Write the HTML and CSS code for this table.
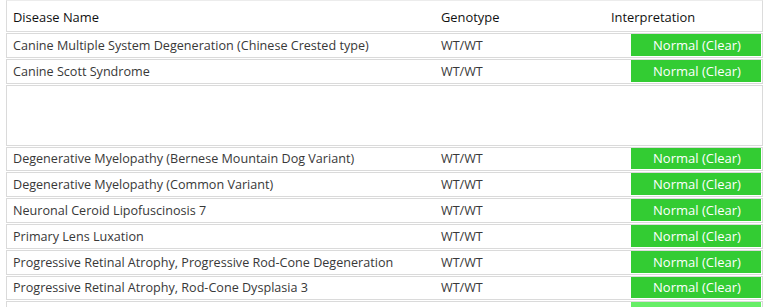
FILE: index.html
```html
<!DOCTYPE html>
<html>
<head>
<meta charset="utf-8">
<link rel="stylesheet" href="styles.css">
</head>
<body>
<div class="panel">
  <div class="head">
    <div class="c1">Disease Name</div>
    <div class="c2">Genotype</div>
    <div class="c3">Interpretation</div>
  </div>
  <div class="row"><div class="c1">Canine Multiple System Degeneration (Chinese Crested type)</div><div class="c2">WT/WT</div><div class="c3"><span class="badge">Normal (Clear)</span></div></div>
  <div class="row"><div class="c1">Canine Scott Syndrome</div><div class="c2">WT/WT</div><div class="c3"><span class="badge">Normal (Clear)</span></div></div>
  <div class="row spacer"></div>
  <div class="row"><div class="c1">Degenerative Myelopathy (Bernese Mountain Dog Variant)</div><div class="c2">WT/WT</div><div class="c3"><span class="badge">Normal (Clear)</span></div></div>
  <div class="row"><div class="c1">Degenerative Myelopathy (Common Variant)</div><div class="c2">WT/WT</div><div class="c3"><span class="badge">Normal (Clear)</span></div></div>
  <div class="row"><div class="c1">Neuronal Ceroid Lipofuscinosis 7</div><div class="c2">WT/WT</div><div class="c3"><span class="badge">Normal (Clear)</span></div></div>
  <div class="row"><div class="c1">Primary Lens Luxation</div><div class="c2">WT/WT</div><div class="c3"><span class="badge">Normal (Clear)</span></div></div>
  <div class="row"><div class="c1">Progressive Retinal Atrophy, Progressive Rod-Cone Degeneration</div><div class="c2">WT/WT</div><div class="c3"><span class="badge">Normal (Clear)</span></div></div>
  <div class="row"><div class="c1">Progressive Retinal Atrophy, Rod-Cone Dysplasia 3</div><div class="c2">WT/WT</div><div class="c3"><span class="badge">Normal (Clear)</span></div></div>
  <div class="row"><div class="c1"></div><div class="c2"></div><div class="c3"><span class="badge light"></span></div></div>
</div>
</body>
</html>
```
FILE: styles.css
```css
html, body {
  margin: 0;
  padding: 0;
  background: #ffffff;
  overflow: hidden;
}
body {
  font-family: "Open Sans", "Noto Sans", sans-serif;
  font-size: 12.6px;
  color: #383838;
}
.panel {
  padding: 0 5px 0 6px;
  display: flex;
  flex-direction: column;
  gap: 1px;
}
.head {
  display: grid;
  grid-template-columns: 428px 176px 150px;
  height: 30px;
  border: 1px solid #dcdcdc;
  border-top-color: #ececec;
  align-items: center;
  color: #111111;
  font-size: 12.9px;
}
.head .c1, .head .c2, .head .c3 { padding-left: 6px; padding-top: 1px; }
.head .c3 { padding-left: 0; }
.row {
  display: grid;
  grid-template-columns: 428px 196px 130px;
  height: 22.8px;
  border: 1px solid #dadada;
  align-items: stretch;
}
.row .c1, .row .c2 {
  padding-left: 6px;
  display: flex;
  align-items: center;
  white-space: nowrap;
}
.row .c3 {
  display: flex;
  padding-bottom: 1px;
}
.badge {
  flex: 1;
  background: #33cc33;
  color: #ffffff;
  font-size: 13px;
  display: flex;
  align-items: center;
  justify-content: center;
  padding-left: 2px;
}
.badge.light { background: #66ee66; }
.spacer {
  display: block;
  height: 59px;
}
```
